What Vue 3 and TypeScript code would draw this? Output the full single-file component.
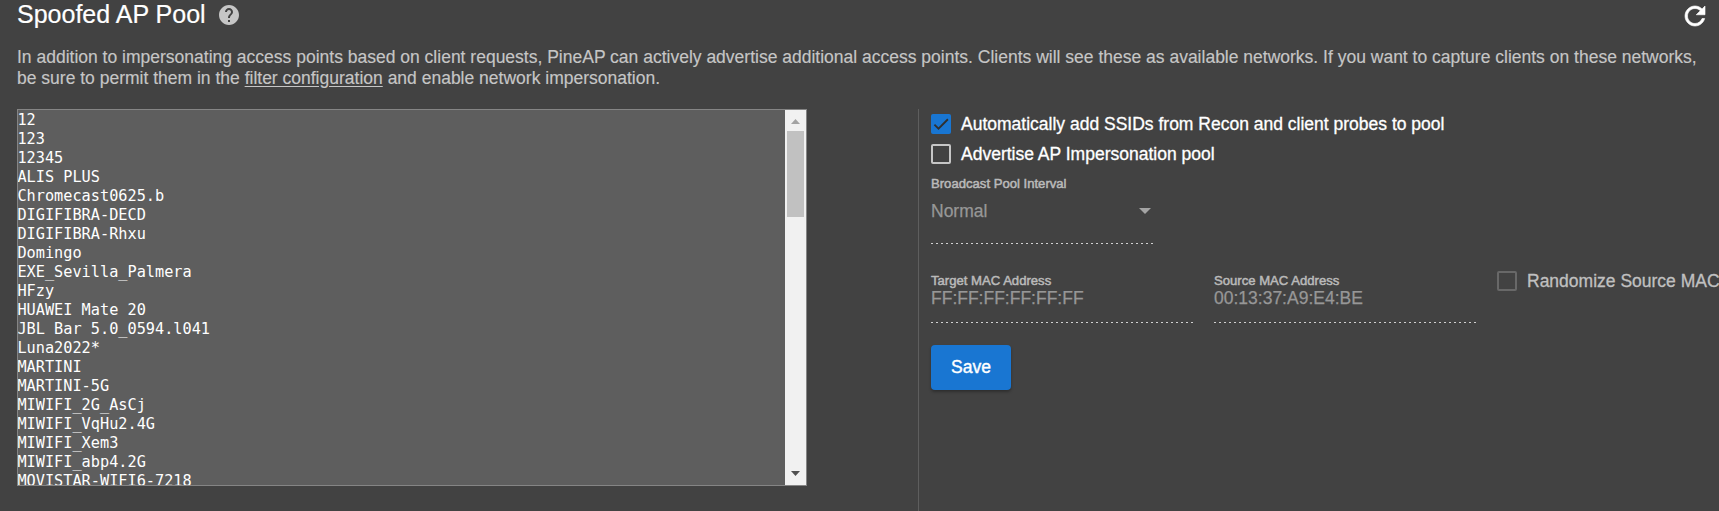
<script setup lang="ts">
import { ref } from 'vue'

const ssids = ref<string[]>([
  '12', '123', '12345', 'ALIS PLUS', 'Chromecast0625.b', 'DIGIFIBRA-DECD', 'DIGIFIBRA-Rhxu',
  'Domingo', 'EXE_Sevilla_Palmera', 'HFzy', 'HUAWEI Mate 20', 'JBL Bar 5.0_0594.l041',
  'Luna2022*', 'MARTINI', 'MARTINI-5G', 'MIWIFI_2G_AsCj', 'MIWIFI_VqHu2.4G', 'MIWIFI_Xem3',
  'MIWIFI_abp4.2G', 'MOVISTAR-WIFI6-7218',
])
const autoAdd = ref(true)
const advertise = ref(false)
</script>

<template>
  <main class="card">
    <header class="head">
      <h1>Spoofed AP Pool</h1>
      <svg class="help" viewBox="2 2 20 20"><path d="M12 2C6.48 2 2 6.48 2 12s4.48 10 10 10 10-4.480 10-10S17.520 2 12 2zm1 17h-2v-2h2v2zm2.070-7.750l-.9.920C13.450 12.900 13 13.500 13 15h-2v-.5c0-1.100.450-2.100 1.170-2.830l1.240-1.260c.370-.360.590-.860.590-1.410 0-1.100-.9-2-2-2s-2 .9-2 2H8c0-2.210 1.790-4 4-4s4 1.790 4 4c0 .880-.360 1.680-.930 2.250z" /></svg>
      <svg class="refresh" viewBox="4 4 16 16"><path d="M17.650 6.350C16.200 4.900 14.210 4 12 4c-4.420 0-7.990 3.580-7.990 8s3.570 8 7.990 8c3.730 0 6.840-2.550 7.730-6h-2.080c-.820 2.330-3.040 4-5.650 4-3.310 0-6-2.690-6-6s2.690-6 6-6c1.660 0 3.140.690 4.220 1.780L13 11h7V4l-2.350 2.350z" /></svg>
    </header>
    <p class="desc">
      <span class="line">In addition to impersonating access points based on client requests, PineAP can actively advertise additional access points. Clients will see these as available networks. If you want to capture clients on these networks,</span>
      <span class="line">be sure to permit them in the <a>filter configuration</a> and enable network impersonation.</span>
    </p>
    <div class="body">
      <section class="pool">
        <div class="list"><div v-for="s in ssids" :key="s" class="row">{{ s }}</div></div>
        <div class="bar">
          <svg class="up" viewBox="0 0 9 5"><path d="M0 5L4.500 0L9 5z" /></svg>
          <div class="thumb"></div>
          <svg class="down" viewBox="0 0 9 5"><path d="M0 0L4.500 5L9 0z" /></svg>
        </div>
      </section>
      <section class="settings">
        <label class="check" @click="autoAdd = !autoAdd">
          <span class="box" :class="{ on: autoAdd }"><svg v-if="autoAdd" viewBox="0 0 24 24"><path d="M4.100 12.700L9 17.600L20.300 6.300" /></svg></span>
          <span>Automatically add SSIDs from Recon and client probes to pool</span>
        </label>
        <label class="check" @click="advertise = !advertise">
          <span class="box" :class="{ on: advertise }"></span>
          <span>Advertise AP Impersonation pool</span>
        </label>
        <div class="field select">
          <span class="label">Broadcast Pool Interval</span>
          <div class="value"><span>Normal</span><svg class="caret" viewBox="0 0 12 6"><path d="M0 0h12L6 6z" /></svg></div>
        </div>
        <div class="macs">
          <div class="field mac">
            <span class="label">Target MAC Address</span>
            <div class="value">FF:FF:FF:FF:FF:FF</div>
          </div>
          <div class="field mac">
            <span class="label">Source MAC Address</span>
            <div class="value">00:13:37:A9:E4:BE</div>
          </div>
          <label class="check disabled"><span class="box"></span><span>Randomize Source MAC</span></label>
        </div>
        <button class="save">Save</button>
      </section>
    </div>
  </main>
</template>

<style>
body { background: #424242; overflow: hidden; }
</style>
<style scoped>
.card { box-sizing: border-box; width: 1719px; height: 511px; overflow: hidden; padding-left: 17px; background: #424242; color: #fff; font-family: "Liberation Sans", Arial, sans-serif; font-size: 17.5px; }
.head { display: flex; height: 47px; align-items: flex-start; }
h1 { margin: 0; font-size: 25px; font-weight: 400; line-height: 28px; white-space: nowrap; width: 202px; -webkit-text-stroke: 0.2px #fff; }
.help { width: 20px; height: 20px; margin-top: 5px; fill: #c6c6c6; }
.refresh { width: 20px; height: 20px; margin: 6px 14px 0 auto; fill: #fff; stroke: #fff; stroke-width: 0.5; overflow: visible; }
.desc { margin: 0; color: #c6c6c6; height: 62px; }
.line { display: block; line-height: 21px; white-space: nowrap; -webkit-text-stroke: 0.15px currentColor; }
.desc a { text-decoration: underline; text-underline-offset: 2px; }
.body { display: flex; }
.pool { box-sizing: border-box; display: flex; width: 790px; height: 377px; border: 1px solid #858585; background: #5e5e5e; overflow: hidden; }
.list { flex: 1; font: 15.24px/19px "DejaVu Sans Mono", monospace; padding-top: 1px; white-space: pre; text-indent: -0.6px; }
.row { height: 19px; }
.bar { width: 21px; background: #f1f1f1; display: flex; flex-direction: column; align-items: center; }
.up, .down { width: 9px; height: 5px; margin-top: 9px; fill: #a3a3a3; }
.thumb { width: 17px; height: 86px; margin-top: 7px; background: #c1c1c1; }
.down { margin: auto 0 9px; fill: #505050; }
.settings { margin-left: 111px; border-left: 1px solid #5e5e5e; padding-left: 12px; height: 402px; flex: 1; min-width: 0; }
.check { display: flex; align-items: center; height: 30px; white-space: nowrap; -webkit-text-stroke: 0.3px currentColor; }
.box { box-sizing: border-box; flex: none; width: 20px; height: 20px; margin-right: 10px; border: 2px solid #c6c6c6; border-radius: 2px; }
.box.on { background: #1976d2; border: 0; }
.box svg { display: block; width: 20px; height: 20px; fill: none; stroke: #303030; stroke-width: 2.200; }
.label { display: block; font-size: 13.125px; line-height: 16px; color: #bababa; -webkit-text-stroke: 0.5px currentColor; white-space: nowrap; }
.value { color: #979797; line-height: 20px; -webkit-text-stroke: 0.25px currentColor; }
.field { box-sizing: border-box; background: repeating-linear-gradient(90deg, #d0d0d0 0 2px, transparent 2px 5px) left bottom / 100% 1px no-repeat; }
.select { width: 222px; height: 68px; margin-top: 7px; }
.select .value { display: flex; align-items: center; justify-content: space-between; margin-top: 9px; padding-right: 2px; }
.caret { width: 12px; height: 6px; fill: #a4a4a4; }
.macs { display: flex; gap: 20px; margin-top: 29px; }
.mac { flex: none; width: 263px; height: 50px; }
.mac .value { line-height: 19px; }
.macs .check { color: #c0c0c0; height: 20px; margin-top: -2px; }
.disabled .box { border-color: #686868; }
.save { display: block; margin-top: 22px; width: 80px; height: 45px; border: 0; border-radius: 4px; padding: 0 0 1px; background: #1976d2; color: #fff; font: inherit; -webkit-text-stroke: 0.4px #fff; box-shadow: 0 2px 3px rgba(0, 0, 0, .3); }
</style>
